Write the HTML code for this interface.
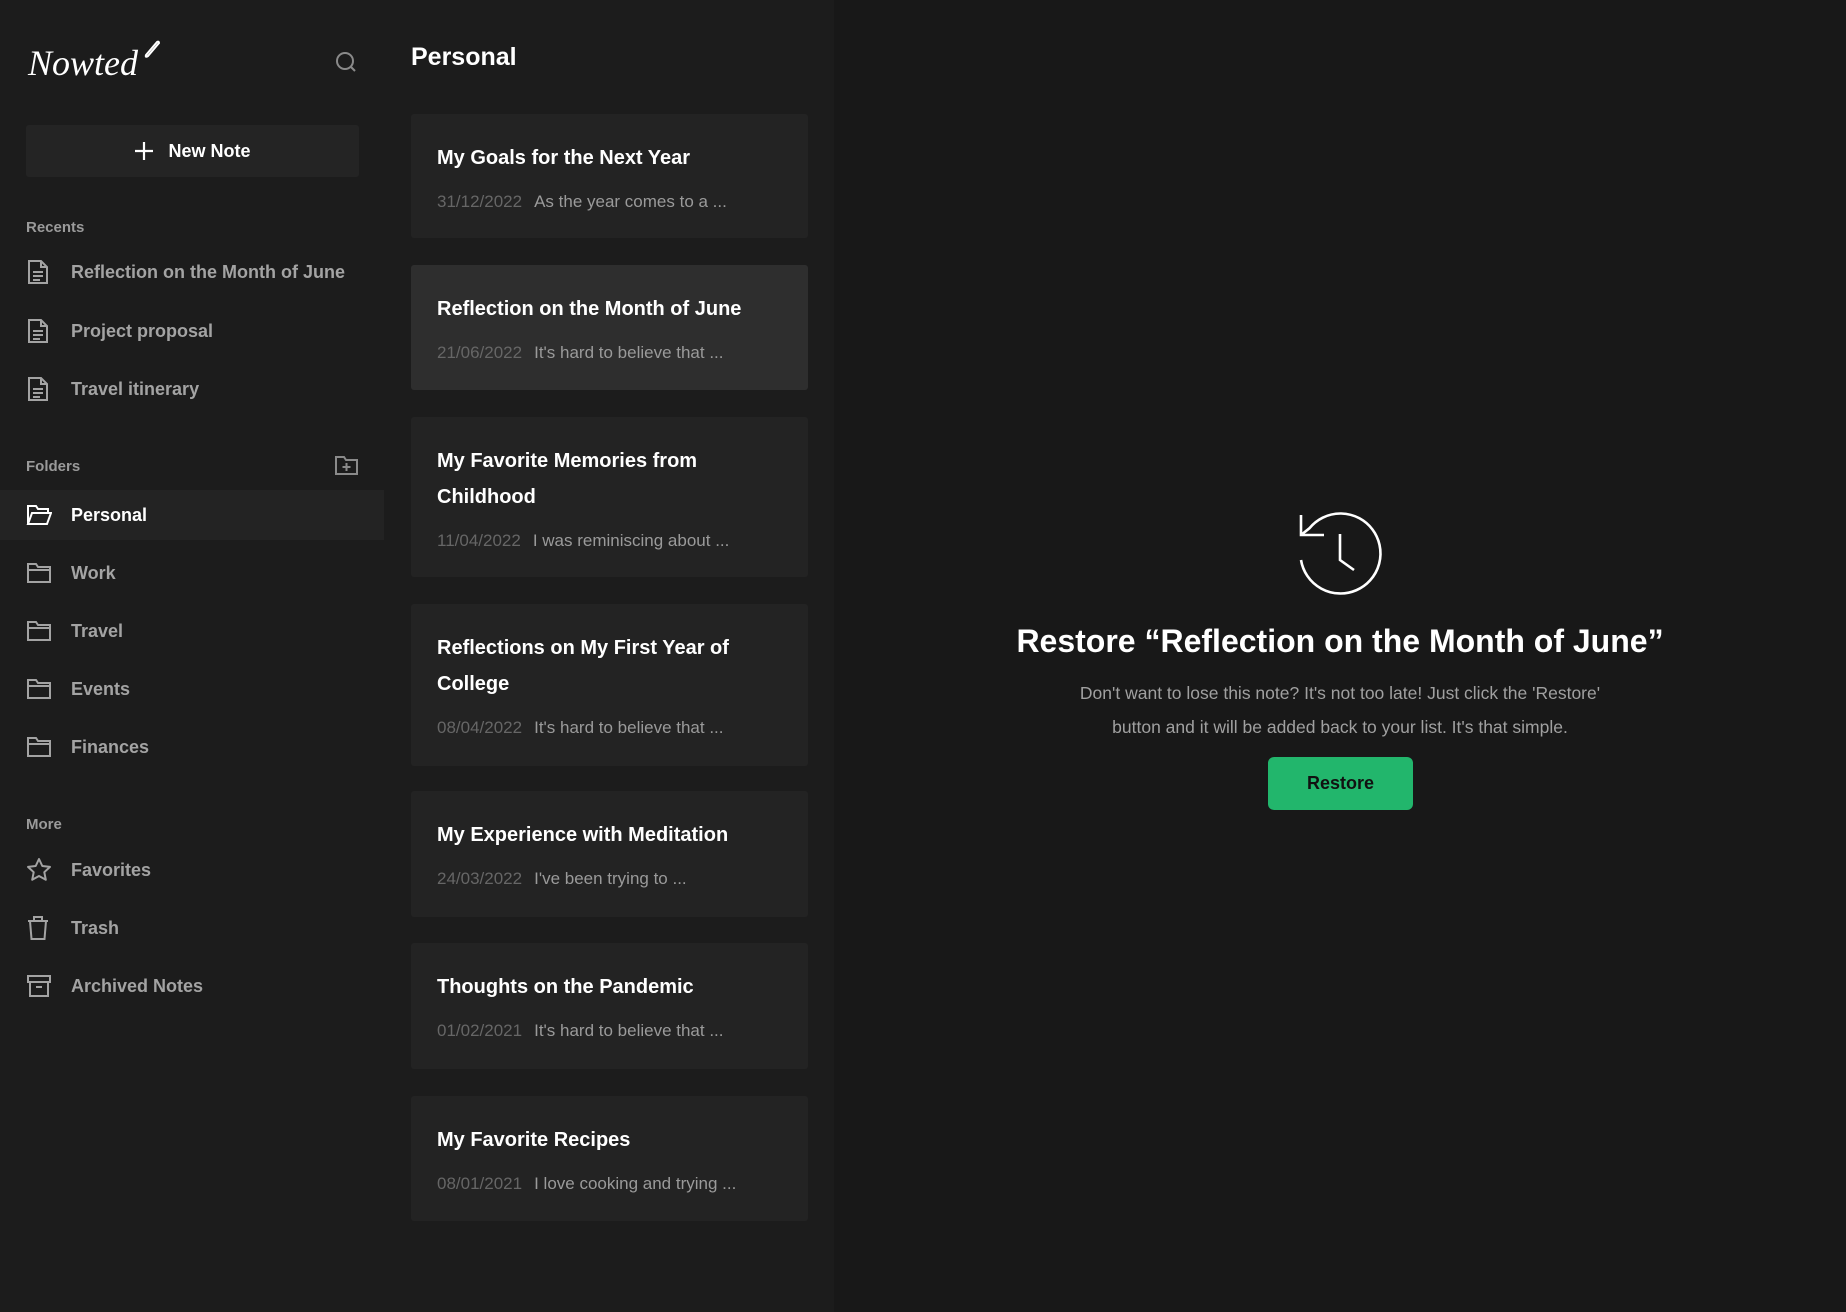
<!DOCTYPE html>
<html><head><meta charset="utf-8"><style>
*{box-sizing:border-box;margin:0;padding:0}
body{width:1846px;height:1312px;background:#181818;font-family:"Liberation Sans",sans-serif;overflow:hidden;position:relative;color:#fff}
.side{position:absolute;left:0;top:0;width:384px;height:1312px;background:#1c1c1c}
.mid{position:absolute;left:384px;top:0;width:450px;height:1312px;background:#1c1c1c}
.abs{position:absolute}
.logo{left:28px;top:42px;font-family:"Liberation Serif",serif;font-style:italic;font-size:36px;color:#fff}
.btn{left:26px;top:125px;width:333px;height:52px;background:#242424;border-radius:3px;display:flex;align-items:center;justify-content:center;font-size:18px;font-weight:bold;color:#fff;gap:14px}
.lbl{left:26px;font-size:15px;color:#9a9a9a;font-weight:bold}
.item{left:0;width:384px;height:50px;display:flex;align-items:center;font-size:18px;color:#a3a3a3;font-weight:bold}
.item svg{position:absolute;left:26px}
.item span{position:absolute;left:71px}
.item.act{background:#232323;color:#fff}
.ptitle{left:411px;top:43px;font-size:25px;font-weight:bold}
.card{left:411px;width:397px;background:#232323;border-radius:3px;padding:26px 26px 0 26px}
.card.sel{background:#2e2e2e}
.card h3{font-size:20px;font-weight:bold;line-height:36px;color:#fff}
.card p{font-size:17px;line-height:36px;margin-top:8px;color:#9a9a9a;white-space:nowrap}
.card p b{font-weight:normal;color:#666;margin-right:12px}
.main h1{position:absolute;left:834px;width:1012px;top:623px;text-align:center;font-size:32px;font-weight:bold}
.main .desc{position:absolute;left:834px;width:1012px;top:676px;text-align:center;font-size:17.5px;line-height:34px;color:#a0a0a0}
.rbtn{left:1268px;top:757px;width:145px;height:53px;background:#22b66c;border-radius:6px;display:flex;align-items:center;justify-content:center;font-size:18px;font-weight:bold;color:#111}
</style></head><body>
<div class="side"></div>
<div class="mid"></div>

<div class="abs logo">Nowted</div>
<svg class="abs" style="left:142px;top:38px" width="20" height="22" viewBox="0 0 20 22"><path d="M4 17 L15 4 Q17 3 17 5 L6 18 Q3 20 4 17Z" fill="none" stroke="#fff" stroke-width="2"/></svg>
<svg class="abs" style="left:334px;top:50px" width="24" height="24" viewBox="0 0 24 24" fill="none" stroke="#8a8a8a" stroke-width="2"><circle cx="11" cy="11" r="8"/><path d="M17 17l4 4"/></svg>

<div class="abs btn"><svg width="20" height="20" viewBox="0 0 20 20" stroke="#fff" stroke-width="2.2"><path d="M10 1v18M1 10h18"/></svg>New Note</div>

<div class="abs lbl" style="top:219px">Recents</div>
<div class="abs item" style="top:247px"><svg width="24" height="26" viewBox="0 0 24 26" fill="none" stroke="#a3a3a3" stroke-width="2"><path d="M3 2h12l6 6v16H3z M15 2v6h6 M7 13h10M7 17h10M7 21h7"/></svg><span>Reflection on the Month of June</span></div>
<div class="abs item" style="top:306px"><svg width="24" height="26" viewBox="0 0 24 26" fill="none" stroke="#a3a3a3" stroke-width="2"><path d="M3 2h12l6 6v16H3z M15 2v6h6 M7 13h10M7 17h10M7 21h7"/></svg><span>Project proposal</span></div>
<div class="abs item" style="top:364px"><svg width="24" height="26" viewBox="0 0 24 26" fill="none" stroke="#a3a3a3" stroke-width="2"><path d="M3 2h12l6 6v16H3z M15 2v6h6 M7 13h10M7 17h10M7 21h7"/></svg><span>Travel itinerary</span></div>

<div class="abs lbl" style="top:458px">Folders</div>
<svg class="abs" style="left:334px;top:454px" width="25" height="22" viewBox="0 0 25 22" fill="none" stroke="#8a8a8a" stroke-width="2"><path d="M2 3h8l2 3h11v14H2z M12.5 9v8M8.5 13h8"/></svg>

<div class="abs item act" style="top:490px"><svg width="26" height="22" viewBox="0 0 26 22" fill="none" stroke="#fff" stroke-width="2"><path d="M2 20V2h8l2 3h10v4 M2 20l4-11h19l-4 11z"/></svg><span>Personal</span></div>
<div class="abs item" style="top:548px"><svg width="26" height="22" viewBox="0 0 26 22" fill="none" stroke="#a3a3a3" stroke-width="2"><path d="M2 2h8l2 3h12v15H2z M2 8h22"/></svg><span>Work</span></div>
<div class="abs item" style="top:606px"><svg width="26" height="22" viewBox="0 0 26 22" fill="none" stroke="#a3a3a3" stroke-width="2"><path d="M2 2h8l2 3h12v15H2z M2 8h22"/></svg><span>Travel</span></div>
<div class="abs item" style="top:664px"><svg width="26" height="22" viewBox="0 0 26 22" fill="none" stroke="#a3a3a3" stroke-width="2"><path d="M2 2h8l2 3h12v15H2z M2 8h22"/></svg><span>Events</span></div>
<div class="abs item" style="top:722px"><svg width="26" height="22" viewBox="0 0 26 22" fill="none" stroke="#a3a3a3" stroke-width="2"><path d="M2 2h8l2 3h12v15H2z M2 8h22"/></svg><span>Finances</span></div>

<div class="abs lbl" style="top:816px">More</div>
<div class="abs item" style="top:845px"><svg width="26" height="26" viewBox="0 0 26 26" fill="none" stroke="#a3a3a3" stroke-width="2" stroke-linejoin="round"><path d="M13 2l3.3 7 7.7.9-5.7 5.3 1.5 7.6L13 19l-6.8 3.8 1.5-7.6L2 9.9 9.7 9z"/></svg><span>Favorites</span></div>
<div class="abs item" style="top:903px"><svg width="24" height="26" viewBox="0 0 24 26" fill="none" stroke="#a3a3a3" stroke-width="2"><path d="M2 6h20 M8 6V2h8v4 M4 6l1.5 18h13L20 6"/></svg><span>Trash</span></div>
<div class="abs item" style="top:961px"><svg width="26" height="24" viewBox="0 0 26 24" fill="none" stroke="#a3a3a3" stroke-width="2"><path d="M2 2h22v6H2z M4 8v14h18V8 M10 13h6"/></svg><span>Archived Notes</span></div>

<div class="abs ptitle">Personal</div>
<div class="abs card" style="top:114px;height:124px"><h3>My Goals for the Next Year</h3><p><b>31/12/2022</b>As the year comes to a ...</p></div>
<div class="abs card sel" style="top:265px;height:125px"><h3>Reflection on the Month of June</h3><p><b>21/06/2022</b>It's hard to believe that ...</p></div>
<div class="abs card" style="top:417px;height:160px"><h3>My Favorite Memories from Childhood</h3><p><b>11/04/2022</b>I was reminiscing about ...</p></div>
<div class="abs card" style="top:604px;height:162px"><h3>Reflections on My First Year of College</h3><p><b>08/04/2022</b>It's hard to believe that ...</p></div>
<div class="abs card" style="top:791px;height:126px"><h3>My Experience with Meditation</h3><p><b>24/03/2022</b>I've been trying to ...</p></div>
<div class="abs card" style="top:943px;height:126px"><h3>Thoughts on the Pandemic</h3><p><b>01/02/2021</b>It's hard to believe that ...</p></div>
<div class="abs card" style="top:1096px;height:125px"><h3>My Favorite Recipes</h3><p><b>08/01/2021</b>I love cooking and trying ...</p></div>

<div class="main">
<svg class="abs" style="left:1296px;top:510px" width="90" height="90" viewBox="0 0 90 90" fill="none" stroke="#fff" stroke-width="2.6"><path d="M5 50 A40 40 0 1 0 13.4 18.3 L5 25 M5 5v20h23"/><path d="M44 24v26l14 10"/></svg>
<h1>Restore “Reflection on the Month of June”</h1>
<div class="desc">Don't want to lose this note? It's not too late! Just click the 'Restore'<br>button and it will be added back to your list. It's that simple.</div>
<div class="abs rbtn">Restore</div>
</div>
</body></html>
